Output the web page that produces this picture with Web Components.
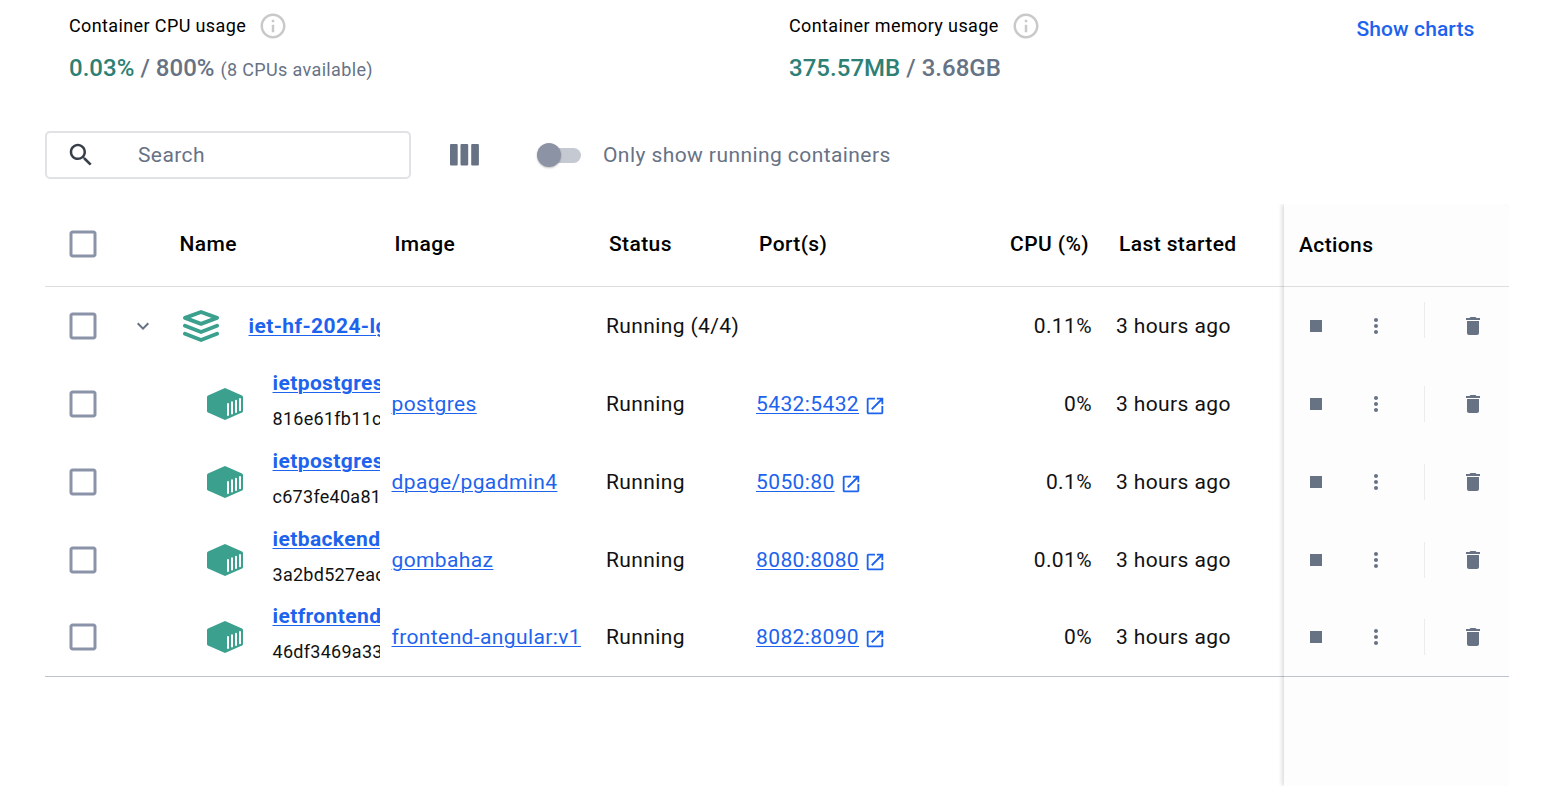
<!DOCTYPE html>
<html lang="en">
<head>
<meta charset="utf-8">
<title>Containers</title>
<style>
html,body{margin:0;height:100%;overflow:hidden;background:#fff}
body{font:400 21px/30px Roboto,"Liberation Sans",sans-serif;letter-spacing:.39px;color:#000}
</style>
</head>
<body>
<containers-page></containers-page>
<script>
const define = (name, html) => customElements.define(name, class extends HTMLElement {
  constructor() {
    super();
    this.attachShadow({mode: 'open'});
  }
  connectedCallback() {
    this.shadowRoot.innerHTML = typeof html === 'function' ? html(this) : html;
  }
});

const glyphs = {
  checkbox: '<path d="M19 5v14H5V5h14m0-2H5c-1.1 0-2 .9-2 2v14c0 1.1.9 2 2 2h14c1.1 0 2-.9 2-2V5c0-1.1-.9-2-2-2z"/>',
  search: '<path d="M15.5 14h-.79l-.28-.27C15.41 12.59 16 11.11 16 9.5 16 5.91 13.09 3 9.5 3S3 5.91 3 9.5 5.91 16 9.5 16c1.61 0 3.09-.59 4.23-1.57l.27.28v.79l5 4.99L20.49 19l-4.99-5zm-6 0C7.01 14 5 11.99 5 9.5S7.01 5 9.5 5 14 7.01 14 9.5 11.99 14 9.5 14z"/>',
  info: '<path d="M11 7h2v2h-2zm0 4h2v6h-2zm1-9C6.48 2 2 6.48 2 12s4.48 10 10 10 10-4.48 10-10S17.52 2 12 2zm0 18c-4.41 0-8-3.59-8-8s3.59-8 8-8 8 3.59 8 8-3.59 8-8 8z"/>',
  chevron: '<path d="M7.41 8.59 12 13.17l4.59-4.58L18 10l-6 6-6-6 1.41-1.41z"/>',
  open: '<path d="M19 19H5V5h7V3H5c-1.11 0-2 .9-2 2v14c0 1.1.89 2 2 2h14c1.1 0 2-.9 2-2v-7h-2v7zM14 3v2h3.59l-9.83 9.83 1.41 1.41L19 6.41V10h2V3h-7z"/>',
  stop: '<path d="M6 6h12v12H6z"/>',
  more: '<path d="M12 8c1.1 0 2-.9 2-2s-.9-2-2-2-2 .9-2 2 .9 2 2 2zm0 2c-1.1 0-2 .9-2 2s.9 2 2 2 2-.9 2-2-.9-2-2-2zm0 6c-1.1 0-2 .9-2 2s.9 2 2 2 2-.9 2-2-.9-2-2-2z"/>',
  trash: '<path d="M6 19c0 1.1.9 2 2 2h8c1.1 0 2-.9 2-2V7H6v12zM19 4h-3.5l-1-1h-5l-1 1H5v2h14V4z"/>',
  columns: '<rect x="0" y="0" width="7.7" height="21.500" rx="1"/><rect x="10.5" y="0" width="7.7" height="21.500" rx="1"/><rect x="21.2" y="0" width="7.7" height="21.500" rx="1"/>',
  stack: '<path fill="none" stroke="currentColor" stroke-width="3.900" stroke-linecap="round" stroke-linejoin="round" d="M18 2 34 7.900 18 13.800 2 7.900zM2 15.800l16 6.200 16-6.200M2 23.800 18 30l16-6.200"/>',
  container: '<path d="M18 0 35 7.4q1 .5 1 1.5V22.900q0 1-1 1.500L18 32 1 24.400q-1-.5-1-1.500V8.900q0-1 1-1.500z"/><path fill="none" stroke="#fff" stroke-width="2" stroke-linecap="round" d="M21 16v11M25 14.300v11.300M29 12.700V24M33 11V22.300"/>'
};
const boxes = {columns: '0 0 29 22', stack: '0 0 36 32', container: '0 0 36 32'};

define('ui-icon', el => {
  const n = el.getAttribute('name'), w = el.getAttribute('w') || 24, h = el.getAttribute('h') || w;
  return `<style>:host{display:block;flex:none;width:${w}px;height:${h}px}svg{display:block;width:100%;height:100%;fill:currentColor}</style>
  <svg viewBox="${boxes[n] || '0 0 24 24'}">${glyphs[n]}</svg>`;
});

define('usage-stat', `<style>
  :host{display:block}
  .label{display:flex;align-items:center;gap:12px;height:30px;font-size:18px;letter-spacing:.38px}
  ui-icon{color:#c9c9c9}
  .value{margin-top:12px;height:30px;font-size:24px;font-weight:500;color:#677285;letter-spacing:.03px;white-space:nowrap}
</style>
<div class="label"><slot name="label"></slot><ui-icon name="info" w="30"></ui-icon></div>
<div class="value"><slot></slot></div>`);

define('search-field', `<style>
  :host{display:flex;align-items:center;box-sizing:border-box;width:366px;height:48px;border:2px solid #e1e2e6;border-radius:5px;padding:0 19px;color:#677285}
  ui-icon{color:#393f49;margin-right:42px}
</style><ui-icon name="search" w="30"></ui-icon><slot></slot>`);

define('toggle-switch', `<style>
  :host{display:flex;align-items:center;gap:22px;color:#677285;white-space:nowrap;letter-spacing:.42px}
  .track{width:44px;height:15px;border-radius:8px;background:#c5c9d2;display:flex;align-items:center}
  .thumb{flex:none;width:24px;height:24px;border-radius:50%;background:#8b93a5;box-shadow:0 1px 2px rgba(0,0,0,.25)}
</style><div class="track"><div class="thumb"></div></div><slot></slot>`);

define('table-head', `<style>
  :host{display:grid;grid-template-columns:74.5px 60px 215px 214.500px 150px 330px 1fr;align-items:center;height:83px;box-sizing:border-box;border-bottom:1px solid #dedede;padding-bottom:2px;font-weight:500;white-space:nowrap}
  ui-icon{margin-left:20px;color:#8b93a8}
  .wide{display:flex;justify-content:space-between}
  .last{padding-left:30px}
</style>
<ui-icon name="checkbox" w="36"></ui-icon><span></span><span>Name</span><span>Image</span><span>Status</span>
<div class="wide"><span>Port(s)</span><span>CPU (%)</span></div><span class="last">Last started</span>`);

define('container-row', el => {
  const a = n => el.getAttribute(n);
  const group = el.hasAttribute('group');
  return `<style>
  :host{display:grid;grid-template-columns:75px 60px 200px 11.5px 214.500px 150px 336px 1fr;align-items:center;height:78px;white-space:nowrap;color:#111}
  .check{margin-left:20px;color:#8b93a8}
  .chev{margin-left:11px;color:#677285}
  .name{display:flex;align-items:center;overflow:hidden;height:76px;padding-left:${group ? 3 : 27}px}
  .name ui-icon{color:#3ba08d;margin-right:29.5px}
  .text a{display:block;font-weight:700}
  .text.two{padding-bottom:6px}
  .id{display:block;font-size:18px;line-height:30px;margin-top:6px;letter-spacing:.28px}
  a{color:#1d63ed;text-decoration:underline;text-decoration-thickness:1px;text-underline-offset:2px}
  .port{display:flex;align-items:center;gap:5px}
  .port ui-icon{color:#1d63ed;margin-top:3px}
  .last{padding-left:24px}
  .wide{display:flex;justify-content:space-between}
</style>
<ui-icon class="check" name="checkbox" w="36"></ui-icon>
<span>${group ? '<ui-icon class="chev" name="chevron" w="24"></ui-icon>' : ''}</span>
<div class="name"><ui-icon name="${group ? 'stack' : 'container'}" w="36" h="32"></ui-icon><div class="text ${group ? '' : 'two'}"><a>${a('name')}</a>${group ? '' : `<span class="id">${a('cid')}</span>`}</div></div>
<span></span>
<span>${group ? '' : `<a>${a('image')}</a>`}</span>
<span>${a('status')}</span>
<div class="wide"><span class="port">${group ? '' : `<a>${a('port')}</a><ui-icon name="open" w="22"></ui-icon>`}</span><span>${a('cpu')}</span></div>
<span class="last">3 hours ago</span>`;
});

define('row-actions', el => `<style>
  :host{display:flex;align-items:center;height:78px;color:#677285}
  .stop{margin-left:20px}
  .more{margin-left:36px}
  i{width:1px;height:36px;background:#ececee;margin:0 36px;${el.hasAttribute('group') ? 'margin-bottom:12px' : ''}}
</style><ui-icon class="stop" name="stop" w="24"></ui-icon><ui-icon class="more" name="more" w="24"></ui-icon><i></i><ui-icon name="trash" w="24"></ui-icon>`);

define('actions-panel', `<style>
  :host{display:block;width:225px;height:582px;background:#fdfdfd;box-shadow:-2px 0 4px rgba(0,0,0,.14);clip-path:inset(0 0 0 -8px);border-top-right-radius:6px}
  header{height:83px;box-sizing:border-box;border-bottom:1px solid #dedede;display:flex;align-items:center;padding-left:15px;font-weight:500}
  .rows{height:390px;box-sizing:border-box;border-bottom:1px solid #bcc5ce}
  row-actions:last-child{height:76px}
</style>
<header>Actions</header>
<div class="rows"><row-actions group></row-actions><row-actions></row-actions><row-actions></row-actions><row-actions></row-actions><row-actions></row-actions></div>`);

define('containers-page', `<style>
  :host{display:block;height:797px;overflow:hidden;background:#fff}
  .stats{display:grid;grid-template-columns:720px 567.5px 1fr;padding:11px 0 0 69px;height:120px;box-sizing:border-box}
  .green{color:#2e7f74}
  small{font-size:18px;font-weight:400;letter-spacing:.35px}
  .link{color:#1d63ed;font-weight:500;line-height:36px;letter-spacing:.1px}
  .tools{display:flex;align-items:center;height:48px;padding:11px 0 0 45px}
  .tools ui-icon{margin:0 58px 0 39px;color:#677285}
  .table{display:flex;margin:25px 0 0 45px;width:1464px}
  .main{width:1239px}
  .rows{height:390px;box-sizing:border-box;border-bottom:1px solid #bcc5ce}
  container-row:last-child{height:76px}
</style>
<div class="stats">
  <usage-stat><span slot="label">Container CPU usage</span><span class="green">0.03%</span> / 800% <small>(8 CPUs available)</small></usage-stat>
  <usage-stat><span slot="label">Container memory usage</span><span class="green">375.57MB</span> / 3.68GB</usage-stat>
  <span class="link">Show charts</span>
</div>
<div class="tools"><search-field>Search</search-field><ui-icon name="columns" w="29" h="22"></ui-icon><toggle-switch>Only show running containers</toggle-switch></div>
<div class="table">
  <div class="main">
    <table-head></table-head>
    <div class="rows">
      <container-row group name="iet-hf-2024-lgtm" status="Running (4/4)" cpu="0.11%"></container-row>
      <container-row name="ietpostgres" cid="816e61fb11c2" image="postgres" status="Running" port="5432:5432" cpu="0%"></container-row>
      <container-row name="ietpostgres" cid="c673fe40a81b" image="dpage/pgadmin4" status="Running" port="5050:80" cpu="0.1%"></container-row>
      <container-row name="ietbackend" cid="3a2bd527eac1" image="gombahaz" status="Running" port="8080:8080" cpu="0.01%"></container-row>
      <container-row name="ietfrontend" cid="46df3469a33b" image="frontend-angular:v1" status="Running" port="8082:8090" cpu="0%"></container-row>
    </div>
  </div>
  <actions-panel></actions-panel>
</div>`);
</script>
</body>
</html>
